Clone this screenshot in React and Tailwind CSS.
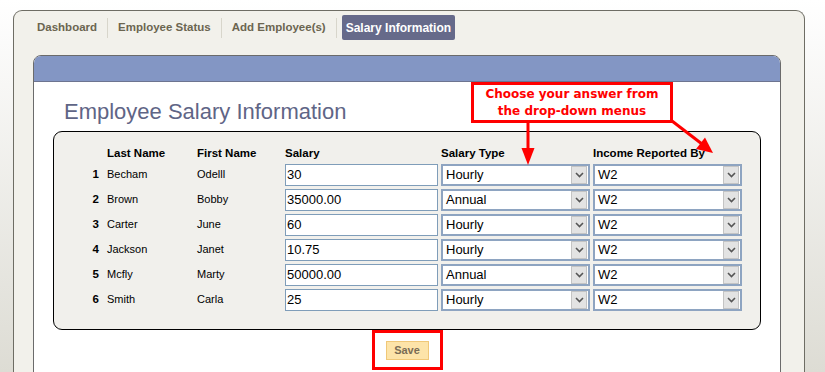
const rows = [
  { n: 1, last: "Becham", first: "Odelll", salary: "30", type: "Hourly", income: "W2" },
  { n: 2, last: "Brown", first: "Bobby", salary: "35000.00", type: "Annual", income: "W2" },
  { n: 3, last: "Carter", first: "June", salary: "60", type: "Hourly", income: "W2" },
  { n: 4, last: "Jackson", first: "Janet", salary: "10.75", type: "Hourly", income: "W2" },
  { n: 5, last: "Mcfly", first: "Marty", salary: "50000.00", type: "Annual", income: "W2" },
  { n: 6, last: "Smith", first: "Carla", salary: "25", type: "Hourly", income: "W2" },
];

const Select = ({ value }) => (
  <div className="ml-[3px] w-[149px] h-[22px] border-2 border-[#8ea4c1] bg-white flex items-center">
    <span className="flex-1 pl-[3px] text-[13px] text-black">{value}</span>
    <div className="w-[16px] h-[18px] mr-[1px] bg-[#e3e3e3] border border-[#c4c4c4] flex items-center justify-center">
      <svg width="9" height="6" viewBox="0 0 9 6">
        <path d="M1 1l3.5 3.5L8 1" fill="none" stroke="#555" strokeWidth="1.6" />
      </svg>
    </div>
  </div>
);

const tabs = ["Dashboard", "Employee Status", "Add Employee(s)"];

export default function App() {
  return (
    <div
      className="relative w-[825px] h-[372px] overflow-hidden bg-gradient-to-b from-white to-[#dddcd4] pt-[10px] pl-[13px] pr-[20px]"
      style={{ fontFamily: '"Liberation Sans", Arial, sans-serif' }}
    >
      <div className="h-[420px] bg-[#f2f1eb] border border-b-0 border-[#6e6d64] rounded-t-[9px]">
        {/* tabs */}
        <div className="flex items-center mt-[4px] pl-[13px] h-[25px] text-[11.5px] font-bold text-[#6b6550]">
          {tabs.map((t) => (
            <div key={t} className="flex items-center">
              <span className="px-[10px]">{t}</span>
              <span className="w-px h-[20px] bg-[#d8d6cb]" />
            </div>
          ))}
          <span className="ml-[5px] h-[25px] px-[4px] flex items-center rounded-[2px] bg-[#666a8a] text-white text-[12px]">
            Salary Information
          </span>
        </div>

        {/* panel */}
        <div className="mt-[15px] ml-[19px] mr-[23px] h-[400px] border border-[#6b6b6b] rounded-t-[8px] overflow-hidden bg-white">
          <div className="h-[26px] bg-[#8396c4] border-b border-[#6d7490]" />
          <h1 className="pt-[17px] pl-[30px] text-[22px] leading-[26px] text-[#5f6586]">
            Employee Salary Information
          </h1>

          <div className="mt-[6px] ml-[19px] w-[708px] border border-black rounded-[9px] bg-[#f1f0ec] pt-[14px] pb-[17px] text-[11px] text-black">
            <div className="flex items-center h-[16px] font-bold text-[11.5px]">
              <span className="w-[45px]" />
              <span className="ml-[8px] w-[90px]">Last Name</span>
              <span className="w-[88px]">First Name</span>
              <span className="w-[156px]">Salary</span>
              <span className="w-[152px]">Salary Type</span>
              <span>Income Reported By</span>
            </div>
            {rows.map((r) => (
              <div key={r.n} className="flex items-center h-[25px]">
                <span className="w-[45px] text-right font-bold text-[11.5px]">{r.n}</span>
                <span className="ml-[8px] w-[90px]">{r.last}</span>
                <span className="w-[88px]">{r.first}</span>
                <div className="w-[153px] h-[22px] border border-[#7f9db9] bg-white flex items-center pl-[1px] text-[13px]">
                  {r.salary}
                </div>
                <Select value={r.type} />
                <Select value={r.income} />
              </div>
            ))}
          </div>

          <div className="flex justify-center w-[708px] ml-[19px] mt-[11px]">
            <button className="w-[43px] h-[19px] bg-[#fde4a9] border border-[#f0c878] text-[11px] font-bold text-[#7a6c55]">
              Save
            </button>
          </div>
        </div>
      </div>

      {/* annotations */}
      <div className="absolute left-[471px] top-[82px] w-[202px] h-[41px] border-[3px] border-[#ff0000] bg-white flex flex-col items-center justify-center text-[#ff0000] font-bold text-[12px] leading-[17px]" style={{ fontFamily: '"DejaVu Sans", Verdana, sans-serif' }}>
        <span>Choose your answer from</span>
        <span>the drop-down menus</span>
      </div>
      <div className="absolute left-[372px] top-[330px] w-[71px] h-[40px] border-[3px] border-[#ff0000]" />
      <svg className="absolute left-0 top-0 pointer-events-none" width="825" height="372">
        <line x1="528" y1="122" x2="528" y2="150" stroke="#ff0000" strokeWidth="3" />
        <polygon points="521.5,148 534.5,148 528,165" fill="#ff0000" />
        <line x1="672" y1="121" x2="702" y2="144" stroke="#ff0000" strokeWidth="3" />
        <polygon points="696,149 705,137.5 713,153" fill="#ff0000" />
      </svg>
    </div>
  );
}
